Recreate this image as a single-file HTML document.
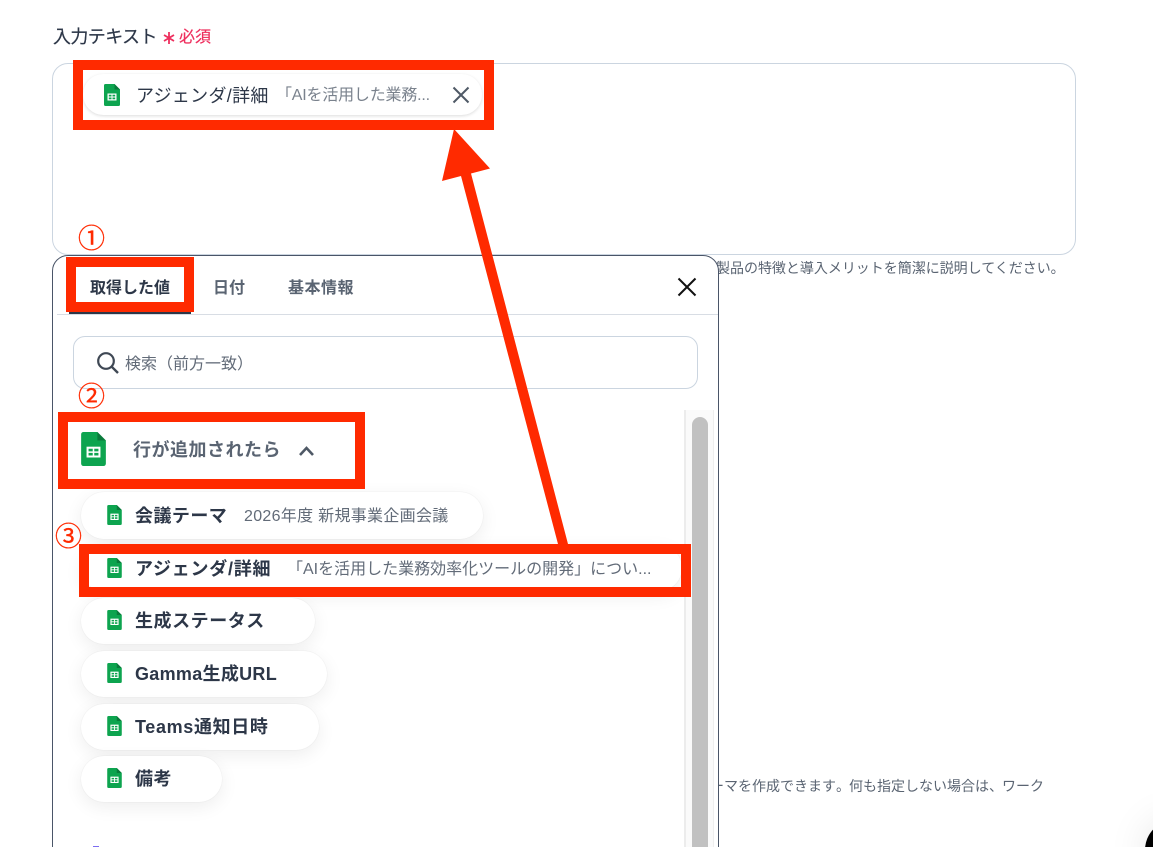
<!DOCTYPE html>
<html lang="ja"><head><meta charset="utf-8"><title>入力テキスト</title>
<style>
*{box-sizing:border-box}
html,body{margin:0;padding:0;background:#fff;width:1153px;height:847px;overflow:hidden}
#w{width:1153px;height:847px;position:relative;overflow:hidden;font-family:"Liberation Sans","Noto Sans CJK JP",sans-serif;color:#2d3748;background:#fff}
.a{position:absolute;white-space:nowrap}
.red{position:absolute;border:10px solid #ff2a00;z-index:5}
.chip{position:absolute;height:46px;left:81px;background:#fff;border-radius:23px;box-shadow:0 5px 18px rgba(0,0,0,.07),0 0 1px rgba(0,0,0,.12)}
.n{position:absolute;white-space:nowrap;font-weight:700;font-size:18px;color:#2d3748;z-index:6;letter-spacing:.45px}
.v{position:absolute;white-space:nowrap;font-size:16px;color:#626b78;z-index:6}
.ic{position:absolute;z-index:6}
.num{position:absolute;color:#ff2a00;font-size:27px;line-height:30px;z-index:6;-webkit-text-stroke:.3px #ff2a00}
</style></head><body><div id="w">
<svg width="0" height="0" style="position:absolute"><defs>
<symbol id="s" viewBox="0 0 16 22"><path d="M1.5 0H10.5L16 5.500V20.500A1.500 1.500 0 0 1 14.500 22H1.500A1.500 1.500 0 0 1 0 20.500V1.500A1.500 1.500 0 0 1 1.500 0Z" fill="#0da44f"/><path d="M10.500 0L16 5.500H10.500Z" fill="#0a7a3b"/><path d="M3.500 9.500H12.500V16.500H3.500Z" fill="#fff"/><path d="M4.800 10.800H7.500V12.500H4.800ZM8.500 10.800H11.200V12.500H8.500ZM4.800 13.500H7.500V15.200H4.800ZM8.500 13.500H11.200V15.200H8.500Z" fill="#0da44f"/></symbol>
</defs></svg>

<div class="a" style="left:53px;top:24px;font-size:18px;line-height:26px;color:#2d3748;letter-spacing:-.6px;-webkit-text-stroke:.2px #2d3748">入力テキスト</div>
<svg class="a" style="left:162px;top:31px" width="14" height="14" viewBox="0 0 14 14"><path d="M7 1V13M2 4L12 10M12 4L2 10" stroke="#ee2f5e" stroke-width="1.800" fill="none"/></svg>
<div class="a" style="left:179px;top:27px;font-size:16px;line-height:22px;color:#ee2f5e;-webkit-text-stroke:.2px #ee2f5e">必須</div>

<div class="a" style="left:52px;top:63px;width:1024px;height:192px;border:1px solid #cbd5e0;border-radius:16px"></div>

<div class="a" style="left:83px;top:74px;width:399px;height:41px;background:#fff;border-radius:21px;box-shadow:0 1px 3px rgba(0,0,0,.14)"></div>
<svg class="ic" style="left:104px;top:84px" width="16" height="22"><use href="#s"/></svg>
<div class="a" style="left:136px;top:83px;font-size:18px;line-height:26px;color:#2d3748;z-index:6;letter-spacing:.3px">アジェンダ/詳細</div>
<div class="a" style="left:276px;top:85px;font-size:16px;line-height:22px;color:#7a828d;z-index:6;letter-spacing:-.2px">「AIを活用した業務...</div>
<svg class="ic" style="left:452px;top:86px" width="18" height="18" viewBox="0 0 18 18"><path d="M1.500 1.500L16.500 16.500M16.500 1.500L1.500 16.500" stroke="#4f5966" stroke-width="2" fill="none"/></svg>
<div class="red" style="left:73px;top:60px;width:421px;height:70px"></div>

<div class="a" style="left:716px;top:258px;font-size:14px;line-height:20px;color:#5a6472;letter-spacing:-.02px">製品の特徴と導入メリットを簡潔に説明してください。</div>
<div class="a" style="left:696px;top:776px;font-size:14px;line-height:20px;color:#5a6472">テーマを作成できます<span style="letter-spacing:-1px">。</span>何も指定しない場合は<span style="letter-spacing:-1px">、</span>ワーク</div>

<div class="a" style="left:52px;top:255px;width:667px;height:620px;background:#fff;border:1px solid #4a5568;border-radius:16px;z-index:2"></div>

<div style="position:absolute;left:0;top:0;z-index:3">
<div class="a" style="left:57px;top:314px;width:661px;height:1px;background:#d8dde4"></div>
<div class="a" style="left:69px;top:312px;width:122px;height:2px;background:#2d3748"></div>
<div class="a" style="left:90px;top:278px;font-size:16px;line-height:22px;font-weight:700;color:#2d3748">取得した値</div>
<div class="a" style="left:213px;top:278px;font-size:16px;line-height:22px;font-weight:700;color:#5a6472">日付</div>
<div class="a" style="left:288px;top:278px;font-size:16px;line-height:22px;font-weight:700;color:#5a6472;letter-spacing:.5px">基本情報</div>
<svg class="a" style="left:677px;top:277px" width="20" height="20" viewBox="0 0 20 20"><path d="M1.500 1.500L18.500 18.500M18.500 1.500L1.500 18.500" stroke="#111" stroke-width="2" fill="none"/></svg>
<div class="a" style="left:73px;top:336px;width:625px;height:53px;border:1px solid #cbd5e0;border-radius:12px"></div>
<svg class="a" style="left:96px;top:351px" width="24" height="24" viewBox="0 0 24 24"><circle cx="10" cy="10" r="7.800" stroke="#3f4854" stroke-width="2.200" fill="none"/><path d="M15.800 15.800L22 22" stroke="#3f4854" stroke-width="2.400" fill="none"/></svg>
<div class="a" style="left:125px;top:354px;font-size:16px;line-height:22px;color:#626b78">検索（前方一致）</div>

<div class="a" style="left:684px;top:410px;width:30px;height:440px;background:#fafafa;border-left:2px solid #ececec;border-right:1px solid #eee"></div>
<div class="a" style="left:692px;top:417px;width:16px;height:440px;background:#c1c1c1;border-radius:8px 8px 0 0"></div>

<svg class="a" style="left:81px;top:432px" width="25" height="34"><use href="#s"/></svg>
<div class="a" style="left:133px;top:437px;font-size:18px;line-height:26px;font-weight:700;color:#5a6472;letter-spacing:.5px">行が追加されたら</div>
<svg class="a" style="left:298px;top:445px" width="17" height="12" viewBox="0 0 17 12"><path d="M2 10L8.500 3L15 10" stroke="#4f5966" stroke-width="2.600" fill="none"/></svg>

<div class="chip" style="top:492px;width:402px;height:47px"></div>
<div class="chip" style="top:545px;width:601px"></div>
<div class="chip" style="top:598px;width:234px"></div>
<div class="chip" style="top:651px;width:246px"></div>
<div class="chip" style="top:704px;width:238px"></div>
<div class="chip" style="top:756px;width:141px"></div>

<svg class="ic" style="left:107px;top:505px" width="15" height="20"><use href="#s"/></svg>
<div class="n" style="left:135px;top:503px;line-height:26px">会議テーマ</div>
<div class="v" style="left:244px;top:506px;line-height:22px;letter-spacing:.3px">2026年度 新規事業企画会議</div>
<svg class="ic" style="left:107px;top:558px" width="15" height="20"><use href="#s"/></svg>
<div class="n" style="left:135px;top:556px;line-height:26px;letter-spacing:.75px">アジェンダ/詳細</div>
<div class="v" style="left:287px;top:559px;line-height:22px">「AIを活用した業務効率化ツールの開発」につい...</div>
<svg class="ic" style="left:107px;top:610px" width="15" height="20"><use href="#s"/></svg>
<div class="n" style="left:135px;top:608px;line-height:26px;letter-spacing:.55px">生成ステータス</div>
<svg class="ic" style="left:107px;top:663px" width="15" height="20"><use href="#s"/></svg>
<div class="n" style="left:135px;top:661px;line-height:26px;letter-spacing:.3px">Gamma生成URL</div>
<svg class="ic" style="left:107px;top:716px" width="15" height="20"><use href="#s"/></svg>
<div class="n" style="left:135px;top:714px;line-height:26px;letter-spacing:.65px">Teams通知日時</div>
<svg class="ic" style="left:107px;top:768px" width="15" height="20"><use href="#s"/></svg>
<div class="n" style="left:135px;top:766px;line-height:26px">備考</div>
<div class="a" style="left:93px;top:846px;width:6px;height:1px;background:#7c6cf0"></div>
</div>

<div class="red" style="left:66px;top:257px;width:128px;height:55px"></div>
<div class="red" style="left:58px;top:412px;width:307px;height:77px"></div>
<div class="red" style="left:79px;top:544px;width:612px;height:53px"></div>

<div class="num" style="left:78px;top:224px">①</div>
<div class="num" style="left:78px;top:382px">②</div>
<div class="num" style="left:55px;top:522px">③</div>

<svg class="a" style="left:0;top:0;z-index:7;pointer-events:none" width="1153" height="847" viewBox="0 0 1153 847"><path d="M454 129L490 168.500L471 173.500L568 544H558L461 176L442 181Z" fill="#ff2a00"/></svg>

<div class="a" style="left:1145px;top:820px;width:60px;height:60px;border-radius:50%;background:#000;box-shadow:0 0 40px rgba(0,0,0,.1);z-index:8"></div>
</div></body></html>
